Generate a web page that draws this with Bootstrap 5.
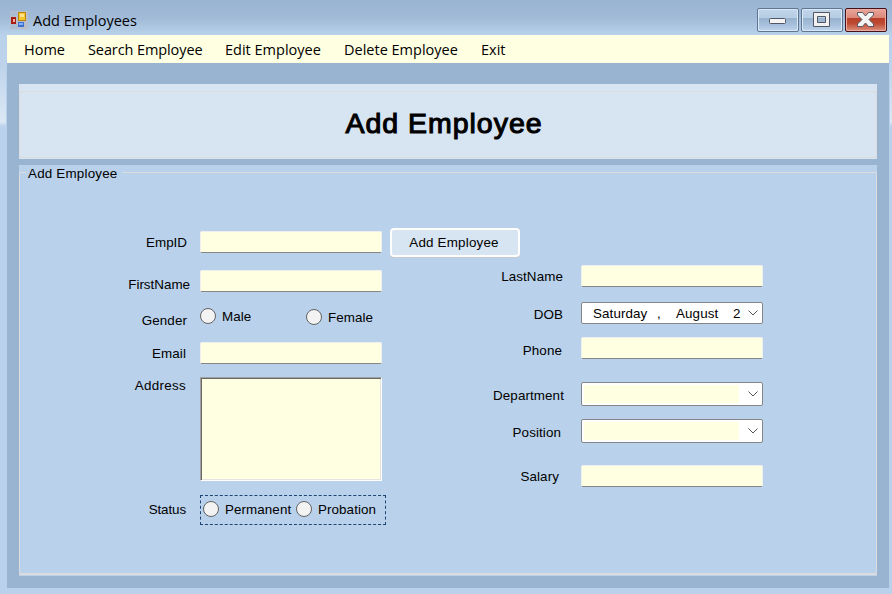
<!DOCTYPE html>
<html lang="en">
<head>
<meta charset="utf-8">
<meta name="viewport" content="width=device-width, initial-scale=1">
<title>Add Employees</title>
<link href="https://cdn.jsdelivr.net/npm/bootstrap@5.3.0/dist/css/bootstrap.min.css" rel="stylesheet">
<style>
  body { font: 13.4px/16px "Liberation Sans", Arial, sans-serif; color: #000; background: #b9d1ea; overflow: hidden; }
  .window { width: 892px; height: 594px; padding: 0 3px 6px 7px; background:
    linear-gradient(#b9d1ea 35px, #bdd3eb 65px, #dce8f5 122px, #c4d8ee 125px, #b9d1ea 127px) 0 0 / 6px 100% no-repeat,
    linear-gradient(#b9d1ea 35px, #bdd3eb 65px, #dce8f5 122px, #c4d8ee 125px, #b9d1ea 127px) 100% 0 / 2px 100% no-repeat, #b9d1ea; }
  .titlebar { height: 35px; margin: 0 -3px 0 -7px; padding: 8px 5px 0 10px; background: linear-gradient(#99b4d1, #a0bad7 50%, #b9d1ea); }
  .caption-text, .menubar { font-family: "Open Sans", "Noto Sans", sans-serif; }
  .caption-text { font-size: 14.5px; line-height: 26px; margin-left: 5px; }
  .app-icon { margin-top: 3px; }
  .win-buttons { gap: 2px; }
  .winbtn { width: 42px; height: 24px; border: 1px solid #5e7692; border-radius: 2px; box-shadow: inset 0 0 0 1px #dbe8f5; background: linear-gradient(#c1d5e9 0, #b6cde4 42%, #99b3cf 43%, #a3bcd8 65%, #bdd4ec); }
  .winbtn-close { border-color: #43101c; box-shadow: inset 0 0 0 1px #ebada0; background: linear-gradient(#e9a79a 0, #db8778 41%, #b93f29 42%, #bd4931 65%, #dc9180); }
  .menubar { height: 28px; background: #ffffe1; font-size: 14.5px; line-height: 30px; padding-left: 17px; }
  .menubar a { color: #000; text-decoration: none; white-space: nowrap; }
  .w-home { width: 64px; } .w-search { width: 137px; letter-spacing: -.1px; } .w-edit { width: 119px; } .w-delete { width: 137px; }
  .client { height: 525px; background: #99b4d1; padding: 21px 12px 12px; width: 882px; }
  .banner { height: 75px; background: #d7e4f2; padding-top: 7px; }
  .banner h1 { height: 67px; border: 1px solid #dcdcdc; margin: 0; font-size: 28.5px; line-height: 62px; font-weight: 400; letter-spacing: .98px; -webkit-text-stroke: 1.1px #000; padding-right: 8px; }
  .group { margin-top: 6px; height: 411px; background: #b9d1ea; padding-top: 7px; }
  .frame { height: 403px; border: 1px solid #dcdcdc; border-bottom-width: 2px; }
  .frame-title { width: 96px; margin: -8px 0 0 6px; padding: 1px 0 0 2px; height: 16px; background: #b9d1ea; letter-spacing: .2px; white-space: nowrap; }
  .left-col { width: 385px; padding-top: 50px; }
  .right-col { width: 350px; padding-top: 84px; }
  .line { display: flex; align-items: flex-start; white-space: nowrap; }
  .tag { text-align: right; flex: none; line-height: 16px; letter-spacing: .1px; padding-top: 4px; }
  .left-col .tag { width: 180px; padding-right: 14px; }
  .right-col .tag { width: 176px; padding-right: 18px; }
  .left-col .t-id { padding-right: 13px; letter-spacing: 0; }
  .left-col .t-first { padding: 7px 10px 0 0; letter-spacing: 0; }
  .left-col .t-gender { padding: 5px 13px 0 0; }
  .left-col .t-address { padding-top: 1px; letter-spacing: .3px; }
  .left-col .t-status { padding-top: 7px; letter-spacing: -.1px; }
  .right-col .t-dob { padding-top: 5px; }
  .right-col .t-phone { padding: 6px 19px 0 0; }
  .right-col .t-dept { padding: 6px 17px 0 0; }
  .right-col .t-pos { padding: 6px 20px 0 0; }
  .right-col .t-salary { padding-right: 22px; }
  .h34 { height: 34px; } .h35 { height: 35px; } .h37 { height: 37px; } .h38 { height: 38px; } .h39 { height: 39px; }
  .h45 { height: 45px; } .h46 { height: 46px; } .h118 { height: 118px; }
  .tbox { width: 182px; height: 22px; background: #ffffe1; border: 1px solid #efefef; border-bottom-color: #868686; border-radius: 2px; flex: none; padding: 0 4px; outline: 0; }
  .area { width: 182px; height: 104px; resize: none; background: #ffffe1; border: 1px solid; border-color: #a0a0a0 #fff #fff #a0a0a0; box-shadow: inset 1px 1px #696969, inset -1px -1px #e3e3e3; outline: 0; }
  .addbtn { width: 130px; height: 29px; margin: -3px 0 0 8px; padding: 0 2px 0 0; font-size: 13.4px; letter-spacing: .2px; color: #000; border: 2px solid #fdfdfd; border-radius: 4px; background: #d7e4f2; box-shadow: 0 1px 0 #c9c9cc; }
  .opt { display: flex; align-items: flex-start; height: 16px; line-height: 18px; letter-spacing: .08px; }
  .opt input { appearance: none; width: 16px; height: 16px; margin: 0 6px 0 0; border: 1px solid #626262; border-radius: 50%; background: #f3f3f3; }
  .opt-male { width: 106px; } .opt-female { margin-top: 1px; } .opt-perm { width: 93px; }
  .status-box { width: 186px; height: 30px; border: 1px dashed #1c4474; padding: 5px 0 0 2px; display: flex; }
  .picker { width: 182px; height: 24px; border: 1px solid #868686; border-radius: 2px; background: #fff; display: flex; align-items: center; flex: none; }
  .picker i { width: 155px; height: 18px; margin-left: 2px; background: #ffffe1; }
  .picker svg { margin-left: 9px; }
  .datebox { height: 22px; padding-left: 11px; }
  .datebox svg { margin-left: 7px; }
  .datebox span { letter-spacing: .1px; padding-top: 2px; }
  .d1 { width: 64px; } .d2 { width: 19px; } .d3 { width: 57px; } .d4 { width: 8px; }
</style>
<script src="https://cdn.jsdelivr.net/npm/bootstrap@5.3.0/dist/js/bootstrap.bundle.min.js"></script>
</head>
<body>
<div class="window">
  <header class="titlebar d-flex align-items-start">
    <svg class="app-icon" width="18" height="18" viewBox="0 0 18 18" shape-rendering="crispEdges">
      <path d="M0 0h18v18H0z" fill="#b9bfca"/><path d="M1 1h6v4H1zM1 13h6v4H1z" fill="#a9bdd3"/>
      <path d="M1 6h5v7H1z" fill="#a91c12"/><path d="M3 8h2v3H3z" fill="#f5b0a4"/>
      <path d="M8 1h8v9H8z" fill="#b88509"/><path d="M9 2h6v7H9z" fill="#f5c632"/><path d="M10 3h4v3h-4z" fill="#ffe28a"/>
      <path d="M8 11h6v5H8z" fill="#3c70d3"/><path d="M9 12h4v2H9z" fill="#86aff5"/>
    </svg>
    <span class="caption-text">Add Employees</span>
    <div class="win-buttons d-flex ms-auto">
      <div class="winbtn"><svg class="d-block" width="40" height="22"><rect x="11.5" y="9.5" width="16" height="5" rx="1" fill="#f4f4f4" stroke="#535666"/></svg></div>
      <div class="winbtn"><svg class="d-block" width="40" height="22"><path d="M11.500 3.500h16v14h-16zM15.500 7.500v6h8v-6z" fill="#f0f0f0" fill-rule="evenodd" stroke="#535666"/></svg></div>
      <div class="winbtn winbtn-close"><svg class="d-block" width="40" height="22"><path d="M11.500 3.500h5l3 3.500 3-3.500h5v2.500l-4.500 4.500 4.500 4.500v2.500h-5l-3-3.500-3 3.500h-5v-2.500l4.500-4.500-4.500-4.500z" fill="#f4f4f4" stroke="#535666" stroke-linejoin="round"/></svg></div>
    </div>
  </header>
  <nav class="menubar d-flex">
    <a class="w-home" href="#">Home</a><a class="w-search" href="#">Search Employee</a><a class="w-edit" href="#">Edit Employee</a><a class="w-delete" href="#">Delete Employee</a><a href="#">Exit</a>
  </nav>
  <main class="client">
    <div class="banner"><h1 class="text-center">Add Employee</h1></div>
    <form class="group">
      <div class="frame" role="group">
        <div class="frame-title">Add Employee</div>
        <div class="d-flex">
          <div class="left-col">
            <div class="line h39"><label class="tag t-id">EmpID</label><input class="tbox"><button type="button" class="addbtn flex-shrink-0">Add Employee</button></div>
            <div class="line h38"><label class="tag t-first">FirstName</label><input class="tbox"></div>
            <div class="line h34"><label class="tag t-gender">Gender</label>
              <label class="opt opt-male"><input type="radio" name="gender">Male</label><label class="opt opt-female"><input type="radio" name="gender">Female</label></div>
            <div class="line h35"><label class="tag">Email</label><input class="tbox"></div>
            <div class="line h118"><label class="tag t-address">Address</label><textarea class="area"></textarea></div>
            <div class="line"><label class="tag t-status">Status</label>
              <div class="status-box"><label class="opt opt-perm"><input type="radio" name="status">Permanent</label><label class="opt"><input type="radio" name="status">Probation</label></div></div>
          </div>
          <div class="right-col">
            <div class="line h37"><label class="tag">LastName</label><input class="tbox"></div>
            <div class="line h35"><label class="tag t-dob">DOB</label>
              <div class="picker datebox"><span class="d1">Saturday</span><span class="d2">,</span><span class="d3">August</span><span class="d4">2</span><svg width="10" height="6"><path d="M.5.500 5 5 9.500.5" fill="none" stroke="#555"/></svg></div></div>
            <div class="line h45"><label class="tag t-phone">Phone</label><input class="tbox"></div>
            <div class="line h37"><label class="tag t-dept">Department</label>
              <div class="picker"><i></i><svg width="10" height="6"><path d="M.5.500 5 5 9.500.5" fill="none" stroke="#555"/></svg></div></div>
            <div class="line h46"><label class="tag t-pos">Position</label>
              <div class="picker"><i></i><svg width="10" height="6"><path d="M.5.500 5 5 9.500.5" fill="none" stroke="#555"/></svg></div></div>
            <div class="line"><label class="tag t-salary">Salary</label><input class="tbox"></div>
          </div>
        </div>
      </div>
    </form>
  </main>
</div>
</body>
</html>
